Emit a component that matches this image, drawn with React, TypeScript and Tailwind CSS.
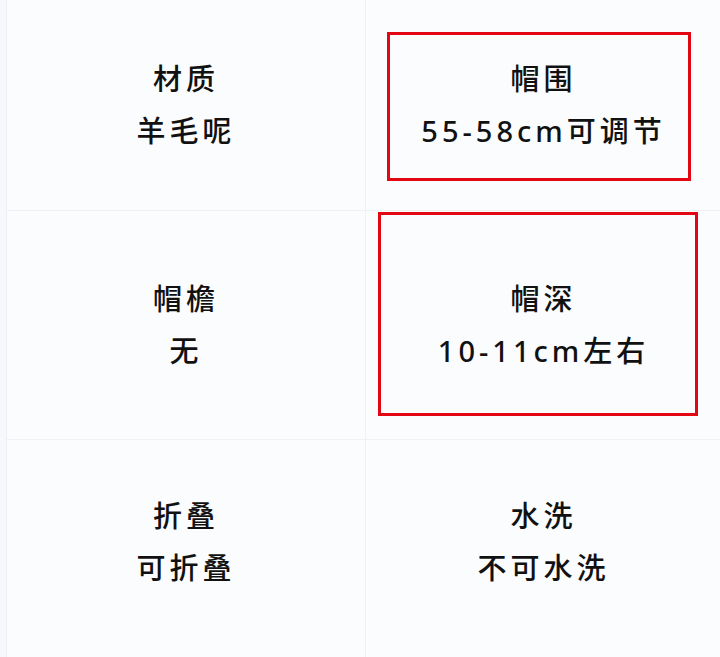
const cells = [
  { label: '材质', value: '羊毛呢' },
  { label: '帽围', value: '55-58cm可调节', box: 'left-[21px] right-[30px] top-[32px] bottom-[29px]' },
  { label: '帽檐', value: '无' },
  { label: '帽深', value: '10-11cm左右', box: 'left-[12px] right-[23px] top-[1px] bottom-[23px]' },
  { label: '折叠', value: '可折叠' },
  { label: '水洗', value: '不可水洗' },
];

export default function App() {
  return (
    <div className="w-[720px] h-[657px] overflow-hidden bg-[#f6f8fb] pl-[6px]">
      <div
        className="grid grid-cols-[359px_355px] grid-rows-[211px_229px_230px] bg-[#fbfcfe] border-l border-[#eceff4] rounded-bl-[14px] overflow-hidden text-[#111111]"
        style={{ fontFamily: '"Noto Sans", "Noto Sans CJK SC", sans-serif' }}
      >
        {cells.map((c, i) => (
          <div
            key={i}
            className={`relative flex flex-col items-center justify-center gap-[14px] border-[#eef1f5] ${
              i % 2 === 0 ? 'border-r' : ''
            } ${i < 4 ? 'border-b' : ''} ${i >= 4 ? 'pb-[26px]' : ''}`}
          >
            <div className="text-[29px] leading-[38px] tracking-[4px] font-medium">{c.label}</div>
            <div className="text-[29px] leading-[38px] tracking-[4px] font-medium">{c.value}</div>
            {c.box && <div className={`absolute border-[3px] border-[#e30613] ${c.box}`} />}
          </div>
        ))}
      </div>
    </div>
  );
}
